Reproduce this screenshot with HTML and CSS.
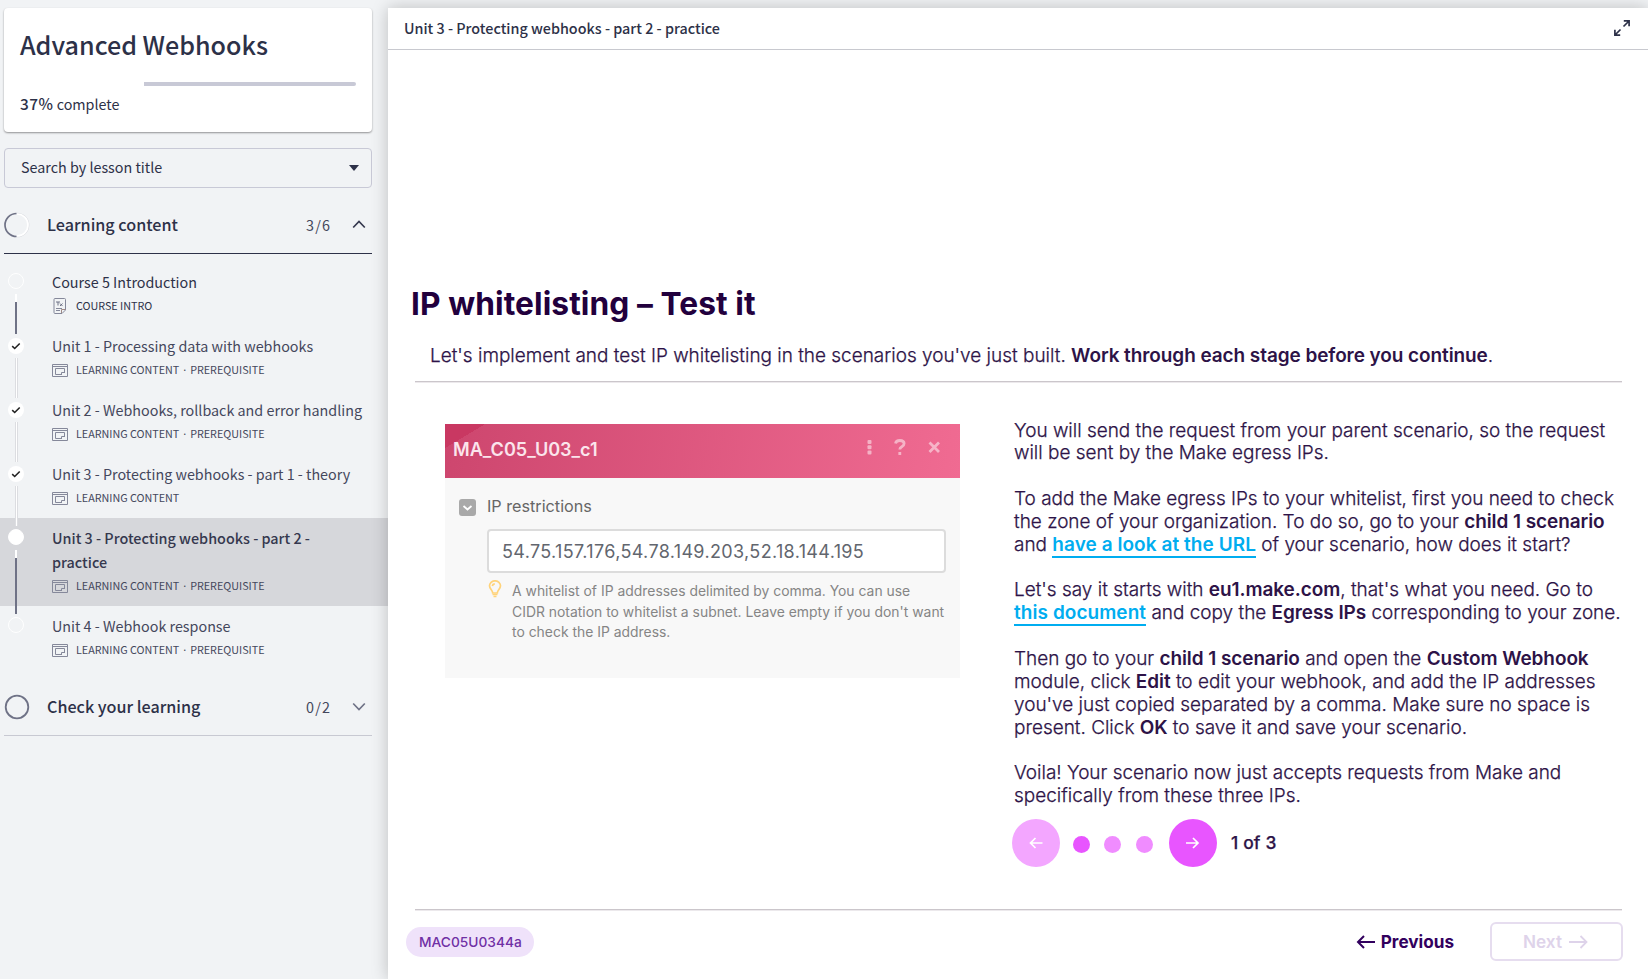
FILE: index.html
```
<!DOCTYPE html>
<html lang="en">
<head>
<meta charset="utf-8">
<title>Advanced Webhooks</title>
<link rel="stylesheet" href="styles.css">
</head>
<body>
<svg width="0" height="0" class="defs">
  <symbol id="page" viewBox="0 0 16 13"><g fill="none" stroke="#85889a" stroke-width="1"><path d="M.5.5h15v12H.5zM.5 2.5h15M12.500 9V4.500h-9v6h6.500"/><path d="M9.500 10.500v-2h3"/></g></symbol>
  <symbol id="check" viewBox="0 0 16 16"><circle cx="8" cy="8" r="8" fill="#fff"/><path d="M4.200 8.200l2.500 2.300 5-5" fill="none" stroke="#222" stroke-width="1.600"/></symbol>
</svg>
<div class="app">
  <aside class="sidebar">
    <section class="card">
      <h1>Advanced Webhooks</h1>
      <div class="bar"><div class="bar-rest"></div></div>
      <p class="pct"><b>37%</b> complete</p>
    </section>
    <div class="search"><span>Search by lesson title</span><svg width="10" height="6" viewBox="0 0 10 6"><path d="M0 0h10L5 6z" fill="#2d3148"/></svg></div>
    <div class="section open">
      <svg class="ring" width="26" height="26" viewBox="0 0 26 26" fill="none" stroke-width="1.700"><path d="M13 1.500a11.500 11.500 0 0 1 0 23" stroke="#dadbe0"/><path d="M13 2a11 11 0 0 1 0 22" stroke="#fff"/><path d="M12.500 1.500a11.500 11.500 0 0 0 0 23" stroke="#6f7286"/></svg>
      <h2>Learning content</h2><span class="count">3/6</span>
      <svg width="14" height="9" viewBox="0 0 14 9"><path d="M1.200 7.500L7 1.500l5.800 6" fill="none" stroke="#35384e" stroke-width="1.700"/></svg>
    </div>
    <ul class="lessons">
      <li>
        <div class="rail"><i class="dot"></i><i class="line progress"></i></div>
        <div class="info"><p class="name dark">Course 5 Introduction</p><p class="meta dark">
          <svg width="16" height="16" viewBox="0 0 16 16" fill="none" stroke="#85889a"><path d="M2 1.500q0-1 1-1h9.500q1 0 1 1V12l-3.500 3.500H3q-1 0-1-1z"/><path d="M9.500 15v-3.500h4" stroke="#a08a86"/><path d="M4 4h4M6 4v3.500M8 5.500l2.500 2.500M10.500 5.500L8 8" stroke="#6f7286"/><path d="M4 10.500h6M4 12.500h4"/></svg>COURSE INTRO</p></div>
      </li>
      <li>
        <div class="rail"><svg class="tick"><use href="#check"/></svg><i class="line"></i></div>
        <div class="info"><p class="name">Unit 1 - Processing data with webhooks</p><p class="meta"><svg width="16" height="13"><use href="#page"/></svg>LEARNING CONTENT · PREREQUISITE</p></div>
      </li>
      <li>
        <div class="rail"><svg class="tick"><use href="#check"/></svg><i class="line"></i></div>
        <div class="info"><p class="name">Unit 2 - Webhooks, rollback and error handling</p><p class="meta"><svg width="16" height="13"><use href="#page"/></svg>LEARNING CONTENT · PREREQUISITE</p></div>
      </li>
      <li>
        <div class="rail"><svg class="tick"><use href="#check"/></svg><i class="line"></i></div>
        <div class="info"><p class="name">Unit 3 - Protecting webhooks - part 1 - theory</p><p class="meta"><svg width="16" height="13"><use href="#page"/></svg>LEARNING CONTENT</p></div>
      </li>
      <li class="active">
        <div class="rail"><i class="dot full"></i><i class="line progress"></i></div>
        <div class="info"><p class="name">Unit 3 - Protecting webhooks - part 2 -<br>practice</p><p class="meta"><svg width="16" height="13"><use href="#page"/></svg>LEARNING CONTENT · PREREQUISITE</p></div>
      </li>
      <li>
        <div class="rail"><i class="dot"></i></div>
        <div class="info"><p class="name">Unit 4 - Webhook response</p><p class="meta"><svg width="16" height="13"><use href="#page"/></svg>LEARNING CONTENT · PREREQUISITE</p></div>
      </li>
    </ul>
    <div class="section">
      <svg class="ring" width="26" height="26" viewBox="0 0 26 26"><circle cx="13" cy="13" r="11.300" fill="none" stroke="#6f7286" stroke-width="1.800"/></svg>
      <h2>Check your learning</h2><span class="count">0/2</span>
      <svg width="14" height="9" viewBox="0 0 14 9"><path d="M1.200 1.500L7 7.500l5.800-6" fill="none" stroke="#6f7286" stroke-width="1.700"/></svg>
    </div>
  </aside>
  <main class="main">
    <header class="top"><span>Unit 3 - Protecting webhooks - part 2 - practice</span>
      <svg width="16" height="16" viewBox="0 0 16 16" fill="none" stroke="#2d3148" stroke-width="1.700"><path d="M9.800 .9h5.300v5.300M15 1L9.500 6.500M.9 9.800v5.300h5.300M1 15l5.500-5.500"/></svg>
    </header>
    <div class="lesson">
      <h2 class="title">IP whitelisting – Test it</h2>
      <p class="intro">Let's implement and test IP whitelisting in the scenarios you've just built. <b>Work through each stage before you continue</b>.</p>
      <div class="cols">
        <figure class="panel">
          <div class="panel-head"><span>MA_C05_U03_c1</span>
            <svg width="75" height="18" viewBox="0 0 75 18"><g fill="#fff" opacity=".5"><rect x="-.500" y="1" width="4" height="4" rx="1"/><rect x="-.500" y="6.300" width="4" height="4" rx="1"/><rect x="-.500" y="11.600" width="4" height="4" rx="1"/></g><g fill="none" stroke="#fff" stroke-width="2.800" opacity=".5"><path d="M27.500 4.500q.6-3 4.300-3 4.300 0 4.300 3.100 0 1.900-2.300 3.100-2 1.100-2 2.900M31.800 13v3"/><path d="M61.500 3.500l9.500 9.500M71 3.500L61.500 13"/></g></svg>
          </div>
          <div class="panel-body">
            <div class="restrict"><svg width="17" height="17" viewBox="0 0 17 17"><rect width="17" height="17" rx="3" fill="#a9a9a9"/><path d="M4.500 7l4 3.500 4-3.500" fill="none" stroke="#fff" stroke-width="1.800"/></svg><span>IP restrictions</span></div>
            <div class="field">54.75.157.176,54.78.149.203,52.18.144.195</div>
            <div class="hint"><svg width="14" height="18" viewBox="0 0 14 18" fill="none" stroke="#ffd37a" stroke-width="1.700"><path d="M4.700 13C4.700 10.500 1.500 9 1.500 5.800a5.500 5 0 0 1 11 0C12.500 9 9.300 10.500 9.300 13z"/><path d="M4.300 6q.3-2 2.500-2.200M4.500 14.500h5M5.500 16.500h3"/></svg>
            <p>A whitelist of IP addresses delimited by comma. You can use<br>CIDR notation to whitelist a subnet. Leave empty if you don't want<br>to check the IP address.</p></div>
          </div>
        </figure>
        <div class="text">
          <p>You will send the request from your parent scenario, so the request<br>will be sent by the Make egress IPs.</p>
          <p>To add the Make egress IPs to your whitelist, first you need to check<br>the zone of your organization. To do so, go to your <b>child 1 scenario</b><br>and <a>have a look at the URL</a> of your scenario, how does it start?</p>
          <p>Let's say it starts with <b>eu1.make.com</b>, that's what you need. Go to<br><a>this document</a> and copy the <b>Egress IPs</b> corresponding to your zone.</p>
          <p>Then go to your <b>child 1 scenario</b> and open the <b>Custom Webhook</b><br>module, click <b>Edit</b> to edit your webhook, and add the IP addresses<br>you've just copied separated by a comma. Make sure no space is<br>present. Click <b>OK</b> to save it and save your scenario.</p>
          <p>Voila! Your scenario now just accepts requests from Make and<br>specifically from these three IPs.</p>
          <div class="pager">
            <span class="round off"><svg width="14" height="12" viewBox="0 0 14 12"><path d="M13.500 6H1.500M6.500 1L1.500 6l5 5" fill="none" stroke="#fff" stroke-width="1.700"/></svg></span>
            <i class="pip on"></i><i class="pip"></i><i class="pip"></i>
            <span class="round"><svg width="14" height="12" viewBox="0 0 14 12"><path d="M0 6h12M7 1l5 5-5 5" fill="none" stroke="#fff" stroke-width="1.700"/></svg></span>
            <span class="pages">1 of 3</span>
          </div>
        </div>
      </div>
      <footer class="foot">
        <span class="tag">MAC05U0344a</span>
        <span class="prev"><svg width="19" height="14" viewBox="0 0 19 14"><path d="M19 7H2M8 1L2 7l6 6" fill="none" stroke="#32005e" stroke-width="2"/></svg>Previous</span>
        <span class="next">Next<svg width="19" height="14" viewBox="0 0 19 14"><path d="M0 7h17.500M11.500 1l6 6-6 6" fill="none" stroke="#ded3ea" stroke-width="1.800"/></svg></span>
      </footer>
    </div>
  </main>
</div>
</body>
</html>
```
FILE: styles.css
```
* { box-sizing: border-box; }
body { margin: 0; background: #f1f3f5; color: #2d3148; font-family: "Noto Sans CJK JP", "Noto Sans", sans-serif; font-size: 14.34px; line-height: 24px; }
h1, h2, p, ul, figure { margin: 0; padding: 0; }
svg { display: block; flex: none; }
.defs { position: absolute; }
.app { display: flex; height: 979px; overflow: hidden; padding-top: 8px; white-space: nowrap; }

.sidebar { width: 388px; flex: none; }
.card { width: 368px; height: 124px; margin-left: 4px; padding: 16px 16px 0; background: #fff; border-radius: 4px; box-shadow: 0 1px 2px rgba(0, 0, 0, .4); }
.card h1 { font-size: 25.1px; line-height: 40px; font-weight: 500; }
.bar { display: flex; justify-content: flex-end; margin-top: 18px; }
.bar-rest { width: 212px; height: 4px; background: #c8c9d6; border-radius: 0 2px 2px 0; }
.pct { margin-top: 5px; }
.pct b { font-weight: 500; font-size: 15.4px; letter-spacing: .5px; }
.search { display: flex; align-items: center; justify-content: space-between; width: 368px; height: 40px; margin: 16px 0 0 4px; padding: 0 12px 0 16px; border: 1px solid #c8c9d6; border-radius: 4px; }
.search span { margin-bottom: 2px; }
.section { display: flex; align-items: center; width: 368px; height: 66px; margin-left: 4px; padding: 8px 6px 0 0; border-bottom: 1px solid #c8c9d2; }
.section.open { border-color: #2d3148; }
.section h2 { flex: 1; margin: -2px 0 0 17px; font-size: 16.15px; font-weight: 500; }
.count { margin-right: 21px; font-size: 14.4px; letter-spacing: 1.1px; color: #44475c; }
.lessons { list-style: none; margin-top: 8px; }
.lessons li { display: flex; padding: 8px 0 8px 8px; }
.lessons .active { background: #d6d7db; }
.rail { display: flex; flex-direction: column; align-items: center; width: 16px; margin: 3px 28px -16px 0; }
.dot { width: 16px; height: 16px; flex: none; border: 1px solid #fff; border-radius: 50%; }
.dot.full { background: #fff; }
.tick { width: 16px; height: 16px; margin-top: 1px; margin-bottom: -1px; }
.line { flex: 1; width: 3px; margin: 5px 0 0 1px; border: solid #dcdde1; border-width: 0 1px; background: #fff; }
.line.progress { border: 0; width: 2px; margin-left: 0; background: linear-gradient(#fff 8px, #6f7286 8px); }
.name { color: #44475c; }
.name.dark, .meta.dark { color: #2d3148; }
.active .name { font-weight: 500; font-size: 14.38px; color: #35384e; }
.meta { display: flex; align-items: center; gap: 8px; font-size: 10.75px; color: #44475c; }

.main { position: relative; flex: 1; background: #fff; box-shadow: 0 0 16px rgba(0, 0, 0, .22); font-family: Inter, sans-serif; color: #2d1347; }
.top { display: flex; align-items: center; justify-content: space-between; height: 42px; padding: 0 18px 2px 16px; border-bottom: 1px solid #c8c9cf; font: 500 14.37px/24px "Noto Sans CJK JP", "Noto Sans", sans-serif; color: #2d3148; }
.lesson { padding: 234px 26px 0 27px; }
.title { margin-left: -4px; font-size: 31.7px; line-height: 40px; font-weight: 700; letter-spacing: .08px; color: #22003d; }
.intro { height: 58px; padding: 20px 0 0 15px; border-bottom: 1px solid #cbc6cb; box-shadow: 0 1px #ece9ec; font-size: 18.97px; line-height: 24px; font-weight: 300; -webkit-text-stroke: .25px; }
b { font-weight: 600; letter-spacing: -.06px; -webkit-text-stroke: 0; }
.cols { display: flex; justify-content: space-between; height: 527px; }
.panel { width: 515px; height: 254px; margin: 42px 0 0 30px; background: #f8f8f8; color: #666; }
.panel-head { display: flex; justify-content: space-between; height: 54px; padding: 10px 17px 0 8px; background: linear-gradient(to bottom right, #c93862 50%, transparent 50%) 0 0 / 40px 24px no-repeat, linear-gradient(100deg, #cd466e, #f06b92); font-size: 18.1px; line-height: 30px; font-weight: 600; letter-spacing: -.02px; color: #fbe5ec; }
.panel-head svg { margin-top: 5px; overflow: visible; }
.panel-body { padding: 16px 14px 0; }
.restrict { display: flex; align-items: center; gap: 11px; height: 24px; font-size: 16.2px; }
.restrict svg { margin-top: 3px; }
.field { height: 44px; margin: 11px 0 0 28px; padding: 0 13px; background: #fff; border: 2px solid #dcdcdc; border-radius: 4px; font-size: 18px; line-height: 41px; letter-spacing: .35px; color: #62666e; }
.hint { display: flex; gap: 11px; margin: 7px 0 0 28px; font-size: 13.92px; line-height: 20.6px; color: #858585; }
.hint svg { margin: 0 0 0 1px; }
.hint p { padding-top: 1px; margin-left: -1px; }
.text { width: 608px; padding-top: 37.6px; font-size: 18.97px; line-height: 22.84px; font-weight: 300; -webkit-text-stroke: .25px; }
.text p + p { margin-top: 22.84px; }
.text a { font-weight: 600; letter-spacing: .08px; -webkit-text-stroke: 0; color: #00adf0; border-bottom: 2px solid #00adf0; }
.pager { display: flex; align-items: center; margin: 11px 0 0 -2px; }
.round { display: flex; align-items: center; justify-content: center; width: 48px; height: 48px; border-radius: 50%; background: #e855ff; }
.round.off { background: #f3a6ff; }
.pip { width: 17px; height: 17px; margin: 3px 0 0 14px; border-radius: 50%; background: #f08cff; }
.pip.on { margin-left: 12.5px; background: #e855ff; }
.pip:nth-of-type(3) { margin-left: 15px; }
.pip + .round { margin-left: 16.5px; }
.pages { margin: 1px 0 0 14px; font-size: 17.4px; font-weight: 500; word-spacing: .5px; }
.foot { display: flex; align-items: center; height: 64px; border-top: 1px solid #cbc6cb; box-shadow: inset 0 1px #ece9ec; }
.tag { margin-left: -9px; padding: 0 12.5px 0 13px; background: #efe2fa; border-radius: 15px; font-size: 13.75px; line-height: 30px; font-weight: 500; color: #7030a5; }
.prev { display: flex; align-items: center; gap: 6px; margin-left: auto; font-size: 17.15px; font-weight: 700; color: #32005e; }
.next { display: flex; align-items: center; justify-content: center; gap: 7px; width: 133px; height: 39px; margin: 0 -1px 0 36px; padding-right: 2px; border: 2px solid #e6ddef; border-radius: 6px; font-size: 17.2px; font-weight: 600; color: #ded3ea; }
```
